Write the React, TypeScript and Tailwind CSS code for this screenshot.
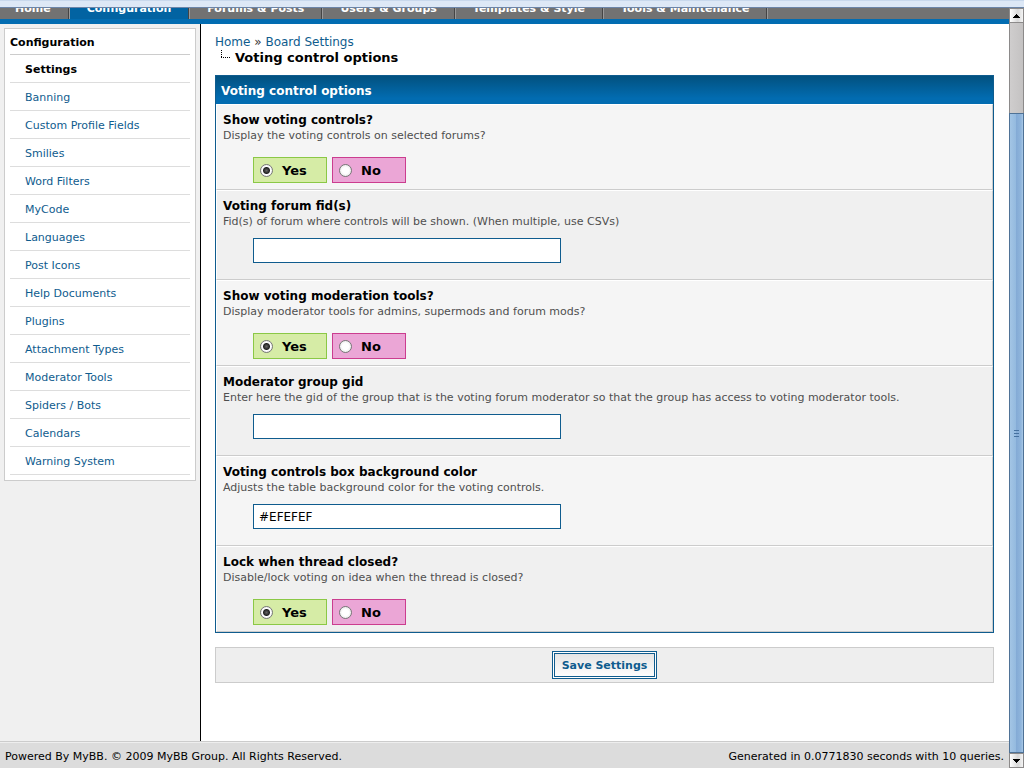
const tabs = ['Home', 'Configuration', 'Forums & Posts', 'Users & Groups', 'Templates & Style', 'Tools & Maintenance'];

const menu = [
  'Settings', 'Banning', 'Custom Profile Fields', 'Smilies', 'Word Filters', 'MyCode', 'Languages', 'Post Icons',
  'Help Documents', 'Plugins', 'Attachment Types', 'Moderator Tools', 'Spiders / Bots', 'Calendars', 'Warning System',
];

type Setting = { id: string; title: string; description: string; kind: 'yesno' | 'text'; value?: string };

const settings: Setting[] = [
  { id: 'show', title: 'Show voting controls?', description: 'Display the voting controls on selected forums?', kind: 'yesno' },
  { id: 'fids', title: 'Voting forum fid(s)', description: 'Fid(s) of forum where controls will be shown. (When multiple, use CSVs)', kind: 'text' },
  { id: 'modtools', title: 'Show voting moderation tools?', description: 'Display moderator tools for admins, supermods and forum mods?', kind: 'yesno' },
  { id: 'gid', title: 'Moderator group gid', description: 'Enter here the gid of the group that is the voting forum moderator so that the group has access to voting moderator tools.', kind: 'text' },
  { id: 'color', title: 'Voting controls box background color', description: 'Adjusts the table background color for the voting controls.', kind: 'text', value: '#EFEFEF' },
  { id: 'lock', title: 'Lock when thread closed?', description: 'Disable/lock voting on idea when the thread is closed?', kind: 'yesno' },
];

const radio =
  'h-[13px] w-[13px] shrink-0 appearance-none rounded-full border border-[#777] bg-[radial-gradient(circle,#fff_40%,#ddd_100%)] checked:bg-[radial-gradient(circle_at_center,#666_0,#222_3px,#fff_4px,#ddd_100%)]';

function YesNo({ id }: { id: string }) {
  return (
    <div className="mt-[13px] ml-[30px] flex gap-[5px] text-[13px] font-bold">
      <label className="flex h-[26px] w-[74px] items-center gap-[9px] border border-[#8bc846] bg-[#d6eca6] pt-px pl-[6px]">
        <input type="radio" name={id} value="1" defaultChecked className={radio} />
        Yes
      </label>
      <label className="flex h-[26px] w-[74px] items-center gap-[9px] border border-[#cb3d8f] bg-[#eba6d6] pt-px pl-[6px]">
        <input type="radio" name={id} value="0" className={radio} />
        No
      </label>
    </div>
  );
}

function SettingRow({ setting, shaded }: { setting: Setting; shaded: boolean }) {
  const yesno = setting.kind === 'yesno';
  return (
    <div
      className={`border-t border-r border-b border-l border-t-white border-r-[#ccc] border-b-[#ccc] border-l-white pt-[7px] pl-[6px] ${shaded ? 'bg-[#f0f0f0]' : 'bg-[#f5f5f5]'} ${yesno ? 'pb-[6px]' : 'pb-4'}`}
    >
      {yesno ? (
        <h2 className="text-[12px] leading-4 font-bold">{setting.title}</h2>
      ) : (
        <label htmlFor={setting.id} className="block text-[12px] leading-4 font-bold">{setting.title}</label>
      )}
      <p className="text-[11px] leading-4 text-[#4f4f4f]">{setting.description}</p>
      {yesno ? (
        <YesNo id={setting.id} />
      ) : (
        <input
          id={setting.id}
          type="text"
          defaultValue={setting.value}
          className="mt-2 ml-[30px] block h-[25px] w-[308px] border border-[#0f5c8e] bg-white px-[5px] text-[12px] outline-none"
        />
      )}
    </div>
  );
}

function ScrollBar() {
  return (
    <div aria-hidden="true" className="flex w-[15px] shrink-0 flex-col border-x border-[#8c8a8a] bg-[linear-gradient(90deg,#cfcdcd,#c4c2c2)]">
      <div className="flex h-[15px] items-center justify-center border-y border-[#8c8a8a] bg-[linear-gradient(90deg,#fff,#d8d8d8_60%,#f4f4f4)]">
        <svg width="7" height="4" viewBox="0 0 7 4" shapeRendering="crispEdges"><path d="M3 0h1v1h1v1h1v1h1v1H0V3h1V2h1V1h1z" /></svg>
      </div>
      <div className="h-[90px]" />
      <div className="-mx-px flex flex-1 items-center justify-center border border-[#4f7296] bg-[linear-gradient(90deg,#a3c5e5_0,#94badf_45%,#84abd6_50%,#8fb5dc_85%,#a9c8e6)]">
        <svg width="5" height="7" viewBox="0 0 5 7" shapeRendering="crispEdges"><path fill="#46719f" d="M0 0h5v1H0zM0 3h5v1H0zM0 6h5v1H0z" /></svg>
      </div>
      <div className="flex h-[15px] items-center justify-center border-y border-[#8c8a8a] bg-[linear-gradient(90deg,#fff,#d8d8d8_60%,#f4f4f4)]">
        <svg width="7" height="4" viewBox="0 0 7 4" shapeRendering="crispEdges"><path d="M0 0h7v1H6v1H5v1H4v1H3V3H2V2H1V1H0z" /></svg>
      </div>
    </div>
  );
}

export default function App() {
  return (
    <div className="flex min-h-screen flex-col bg-white font-['DejaVu_Sans',sans-serif] text-[11px] text-black">
      <div className="h-2 shrink-0 border-t border-b border-t-[#c8d8ec] border-b-[#6c85a8] bg-[#dde8f6]" />
      <div className="flex flex-1">
        <div className="flex min-w-0 flex-1 flex-col">
          <header className="border-b-[5px] border-[#026cb1] bg-[#727272]">
            <nav className="flex h-[11px] items-end overflow-hidden">
              {tabs.map((tab) => (
                <a
                  key={tab}
                  href="#"
                  className={`shrink-0 border-r border-l border-r-[#444] border-l-[#999] px-[17px] pb-[2px] text-[11px] leading-4 font-bold text-white first:border-l-0 first:pl-[15px] ${tab === 'Configuration' ? 'bg-[#0263a2]' : ''}`}
                >
                  {tab}
                </a>
              ))}
              <span className="h-4 w-px bg-[#999]" />
            </nav>
          </header>

          <div className="flex flex-1">
            <aside className="w-[201px] shrink-0 border-r border-black bg-[#f0f0f0] p-1">
              <div className="border border-[#ccc] bg-white px-[5px] pt-[6px] pb-[5px]">
                <h2 className="border-b border-[#ccc] pb-[3px] text-[11px] leading-4 font-bold">Configuration</h2>
                <ul>
                  {menu.map((item) => (
                    <li key={item} className="border-b border-[#ddd]">
                      <a
                        href="#"
                        className={`block pt-[6px] pb-1 pl-[15px] leading-[17px] ${item === 'Settings' ? 'font-bold text-black' : 'text-[#0f5c8e]'}`}
                      >
                        {item}
                      </a>
                    </li>
                  ))}
                </ul>
              </div>
            </aside>

            <main className="min-w-0 flex-1 pt-[10px] pr-[15px] pb-5 pl-[14px]">
              <div className="text-[12px] leading-4 text-[#333]">
                <a href="#" className="text-[#0f5c8e]">Home</a> » <a href="#" className="text-[#0f5c8e]">Board Settings</a>
              </div>
              <h1 className="flex text-[13px] leading-4 font-bold">
                <svg width="20" height="16" viewBox="0 0 20 16" aria-hidden="true" shapeRendering="crispEdges">
                  <path d="M6.5 0v8M6 7.5h10" fill="none" stroke="#000" strokeDasharray="1 1" />
                </svg>
                Voting control options
              </h1>

              <form className="mt-[9px]">
                <section className="border border-[#0f5c8e]">
                  <div className="bg-[linear-gradient(#02517f,#026cb1_80%)] px-[5px] pt-[7px] pb-[5px] text-[12px] leading-4 font-bold text-white">
                    Voting control options
                  </div>
                  {settings.map((setting, i) => (
                    <SettingRow key={setting.id} setting={setting} shaded={i % 2 === 1} />
                  ))}
                </section>
                <div className="mt-[14px] flex h-9 items-center justify-center border border-[#ccc] bg-[#eee]">
                  <button type="button" className="h-7 border border-[#0f5c8e] bg-[linear-gradient(#e3e3e3,#fff)] px-[9px] pt-[2px] text-[11px] font-bold text-[#0f5c8e] shadow-[inset_0_0_0_1px_#fff,inset_0_0_0_2px_#0f5c8e]">
                    Save Settings
                  </button>
                </div>
              </form>
            </main>
          </div>

          <footer className="flex justify-between border-t border-[#ccc] bg-[#dcdcdc] px-[5px] pt-[7px] pb-[3px] leading-4 shadow-[inset_0_1px_0_#eee]">
            <span>Powered By MyBB. © 2009 MyBB Group. All Rights Reserved.</span>
            <span>Generated in 0.0771830 seconds with 10 queries.</span>
          </footer>
        </div>
        <ScrollBar />
      </div>
    </div>
  );
}
